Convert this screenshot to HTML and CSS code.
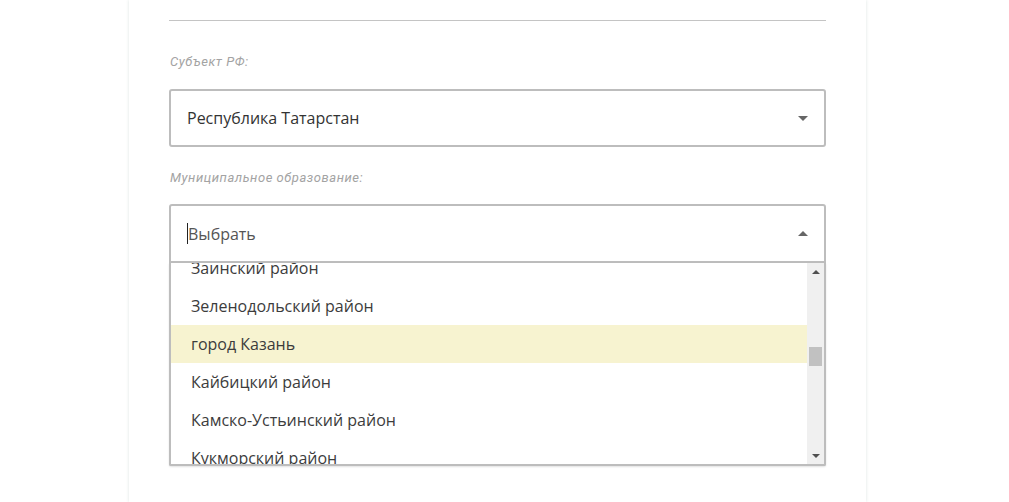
FILE: index.html
```html
<!DOCTYPE html>
<html lang="ru">
<head>
<meta charset="utf-8">
<title>Форма</title>
<link rel="stylesheet" href="styles.css">
</head>
<body>
<div class="page">
  <div class="card">
    <div class="rule"></div>

    <div class="label">Субъект РФ:</div>
    <div class="select">
      <span class="value">Республика Татарстан</span>
      <span class="arrow arrow-down"></span>
    </div>

    <div class="label label-2">Муниципальное образование:</div>
    <div class="combo">
      <div class="select select-open">
        <span class="value placeholder"><span class="caret"></span>Выбрать</span>
        <span class="arrow arrow-up"></span>
      </div>
      <div class="list">
        <div class="viewport">
          <div class="items">
            <div class="item">Заинский район</div>
            <div class="item">Зеленодольский район</div>
            <div class="item item-active">город Казань</div>
            <div class="item">Кайбицкий район</div>
            <div class="item">Камско-Устьинский район</div>
            <div class="item">Кукморский район</div>
          </div>
        </div>
        <div class="scrollbar">
          <div class="sb-btn"><span class="sb-tri sb-up"></span></div>
          <div class="sb-track"><div class="sb-thumb"></div></div>
          <div class="sb-btn"><span class="sb-tri sb-down"></span></div>
        </div>
      </div>
    </div>
  </div>
</div>
</body>
</html>
```

FILE: styles.css
```css
html, body {
  margin: 0;
  padding: 0;
  background: #ffffff;
  height: 100%;
  overflow: hidden;
}

body {
  font-family: "Open Sans", "Liberation Sans", sans-serif;
  color: #333333;
}

.page {
  padding-left: 129px;
  height: 100%;
}

.card {
  width: 657px;
  height: 482px;
  padding: 20px 40px 0 40px;
  background: #ffffff;
  box-shadow: 0 0 3px rgba(120, 150, 140, 0.25);
}

.rule {
  height: 1px;
  background: #c4c4c4;
}

.label {
  margin-top: 32px;
  padding-left: 1px;
  font-family: Roboto, "Liberation Sans", sans-serif;
  font-style: italic;
  font-size: 13px;
  line-height: 18px;
  letter-spacing: 0.55px;
  color: #a3a3a3;
}

.label-2 {
  margin-top: 22px;
}

.select {
  margin-top: 18px;
  height: 54px;
  border: 2px solid #bdbdbd;
  border-radius: 3px;
  display: flex;
  align-items: center;
  justify-content: space-between;
  padding: 0 16px;
  background: #ffffff;
}

.combo {
  margin-top: 17px;
}

.combo .select {
  margin-top: 0;
  height: 55px;
  border-radius: 3px 3px 0 0;
}

.value {
  font-size: 16px;
  color: #333333;
  display: flex;
  align-items: center;
}

.placeholder {
  color: #555555;
}

.caret {
  display: inline-block;
  width: 1px;
  height: 21px;
  background: #222222;
}

.arrow {
  width: 0;
  height: 0;
  border-left: 5px solid transparent;
  border-right: 5px solid transparent;
}

.arrow-down {
  border-top: 5px solid #666666;
}

.arrow-up {
  border-bottom: 5px solid #666666;
}

.list {
  display: flex;
  border: 2px solid #bdbdbd;
  border-top: 0;
  border-radius: 0 0 2px 2px;
  box-shadow: 0 1px 2px rgba(0, 0, 0, 0.12);
  background: #ffffff;
}

.viewport {
  flex: 1;
  height: 201px;
  overflow: hidden;
}

.items {
  margin-top: -14px;
}

.item {
  height: 38px;
  line-height: 38px;
  padding-left: 20px;
  font-size: 16px;
  color: #3c3c3c;
  white-space: nowrap;
}

.item-active {
  background: #f7f3d0;
}

.scrollbar {
  width: 17px;
  background: #f0f0f0;
  display: flex;
  flex-direction: column;
}

.sb-btn {
  height: 17px;
  display: flex;
  align-items: center;
  justify-content: center;
}

.sb-tri {
  width: 0;
  height: 0;
  border-left: 4px solid transparent;
  border-right: 4px solid transparent;
}

.sb-up {
  border-bottom: 4px solid #505050;
}

.sb-down {
  border-top: 4px solid #505050;
}

.sb-track {
  flex: 1;
  display: flex;
  justify-content: center;
}

.sb-thumb {
  width: 13px;
  height: 19px;
  margin-top: 67px;
  background: #c1c1c1;
}
```
